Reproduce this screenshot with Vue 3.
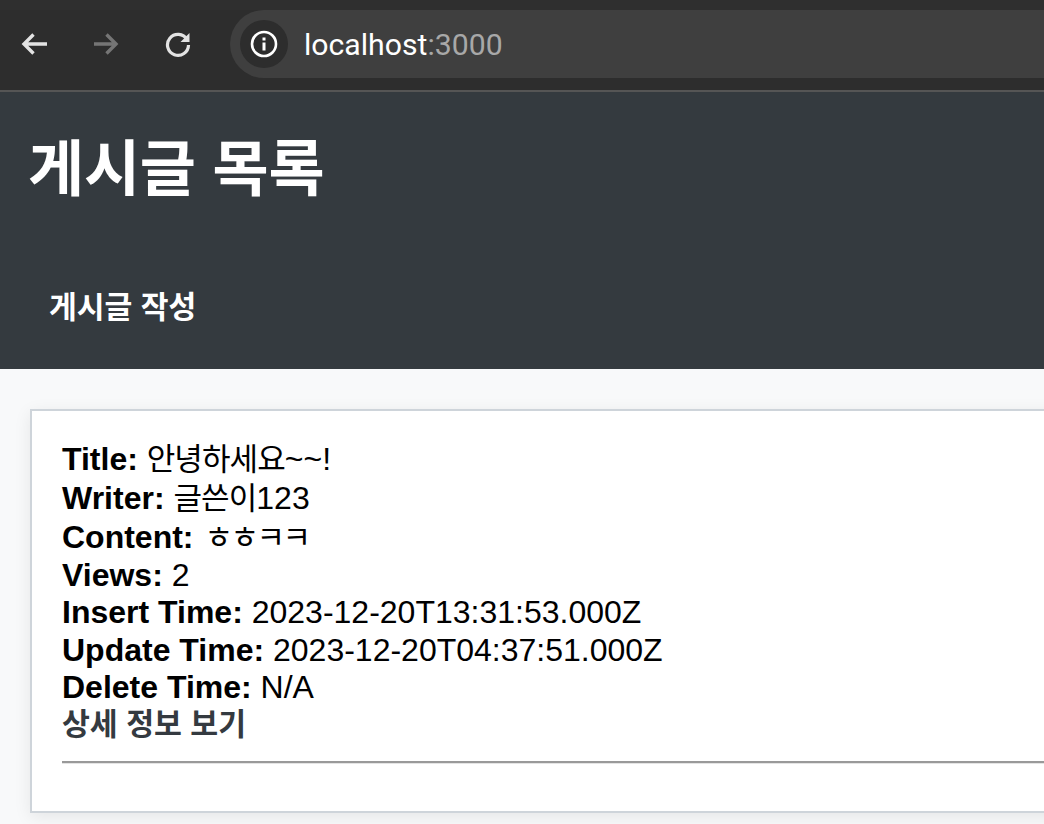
<template>
  <div class="page">
    <div class="toolbar">
      <svg class="nav back" width="28" height="28" viewBox="0 0 28 28" fill="none"><path d="M26 14H4M12.500 4.500 3 14l9.500 9.500" stroke="#e3e3e3" stroke-width="3.400"/></svg>
      <svg class="nav fwd" width="28" height="28" viewBox="0 0 28 28" fill="none"><path d="M3 14h22M15.500 4.500 25 14l-9.500 9.500" stroke="#757575" stroke-width="3.400"/></svg>
      <svg class="nav reload" width="28" height="28" viewBox="0 0 28 28" fill="none"><path d="M23 9.500A10.500 10.500 0 1 0 24.500 15" stroke="#e3e3e3" stroke-width="3.200"/><path d="M25.500 3v9h-9z" fill="#e3e3e3"/></svg>
      <div class="omnibox">
        <div class="info">
          <svg width="28" height="28" viewBox="0 0 28 28" fill="none"><circle cx="14" cy="14" r="12" stroke="#fff" stroke-width="2.600"/><rect x="12.500" y="12.500" width="3" height="8" fill="#fff"/><rect x="12.500" y="7.500" width="3" height="3" fill="#fff"/></svg>
        </div>
        <span class="host">localhost<span class="port">:3000</span></span>
      </div>
    </div>
    <header class="head">
      <h1>게시글 목록</h1>
      <a class="write">게시글 작성</a>
    </header>
    <main class="body">
      <section class="card">
        <div v-for="row in rows" :key="row.k" class="row" :class="{ tall: row.ko }"><b>{{ row.k }}:</b> <span class="ko" :class="{ jamo: row.k === 'Content' }">{{ row.ko }}</span>{{ row.v }}</div>
        <a class="detail">상세 정보 보기</a>
        <div class="rule"></div>
      </section>
    </main>
  </div>
</template>

<script setup>
const rows = [
  { k: 'Title', ko: '안녕하세요', v: '~~!' },
  { k: 'Writer', ko: '글쓴이', v: '123' },
  { k: 'Content', ko: 'ㅎㅎㅋㅋ', v: '' },
  { k: 'Views', ko: '', v: '2' },
  { k: 'Insert Time', ko: '', v: '2023-12-20T13:31:53.000Z' },
  { k: 'Update Time', ko: '', v: '2023-12-20T04:37:51.000Z' },
  { k: 'Delete Time', ko: '', v: 'N/A' },
]
</script>

<style>
html, body { margin: 0; overflow: hidden; background: #f8f9fa; }
</style>

<style scoped>
.page {
  width: 1044px;
  height: 824px;
  overflow: hidden;
  font-family: "Liberation Sans", "Noto Sans CJK KR", sans-serif;
  background: #f8f9fa;
}
.toolbar {
  height: 90px;
  box-sizing: content-box;
  border-bottom: 2px solid #555;
  background: #2d2d2d;
  display: flex;
  align-items: center;
  position: relative;
}
.toolbar::before {
  content: "";
  position: absolute;
  inset: 0 0 auto 0;
  height: 10px;
  background: #2f2f2f;
}
.nav { flex: none; margin-top: -2px; }
.back { margin-left: 21px; }
.fwd { margin-left: 42px; }
.reload { margin-left: 45px; }
.omnibox {
  margin-left: 38px;
  flex: 1;
  height: 68px;
  margin-top: -2px;
  border-radius: 34px 0 0 34px;
  background: #3f3f3f;
  display: flex;
  align-items: center;
  padding-left: 10px;
}
.info {
  width: 48px;
  height: 48px;
  border-radius: 50%;
  background: #2d2d2d;
  display: flex;
  align-items: center;
  justify-content: center;
}
.host {
  margin-left: 16px;
  font-family: Roboto, sans-serif;
  font-size: 30.200px;
  color: #fff;
}
.port { color: #a8a8a8; }
.head {
  height: 277px;
  background: #343a3f;
  color: #fff;
  padding-left: 30px;
  box-sizing: border-box;
  display: flex;
  flex-direction: column;
  align-items: flex-start;
}
h1 {
  margin: 33px 0 0 -2px;
  font-size: 61px;
  line-height: 90px;
  font-weight: 700;
  letter-spacing: -0.200px;
}
.write {
  margin: 71px 0 0 19px;
  font-size: 30.200px;
  line-height: 44px;
  font-weight: 700;
}
.body { padding: 40px 0 0 30px; }
.card {
  width: 1100px;
  height: 404px;
  box-sizing: border-box;
  background: #fff;
  border: 2px solid #ced4da;
  box-shadow: 0 4px 16px rgba(0, 0, 0, 0.08);
  padding: 29px 30px 0;
  font-size: 32px;
  color: #000;
}
.row { line-height: 37.400px; }
.row.tall { line-height: 39px; }
.ko { font-size: 31px; letter-spacing: -0.900px; }
.jamo { letter-spacing: -2.500px; margin-left: 2px; }
.detail {
  display: block;
  font-size: 30.300px;
  line-height: 35px;
  font-weight: 700;
  color: #343a40;
}
.rule {
  margin-top: 19px;
  height: 3px;
  background: linear-gradient(#999 0 2px, #e4e4e4 2px);
}
</style>
